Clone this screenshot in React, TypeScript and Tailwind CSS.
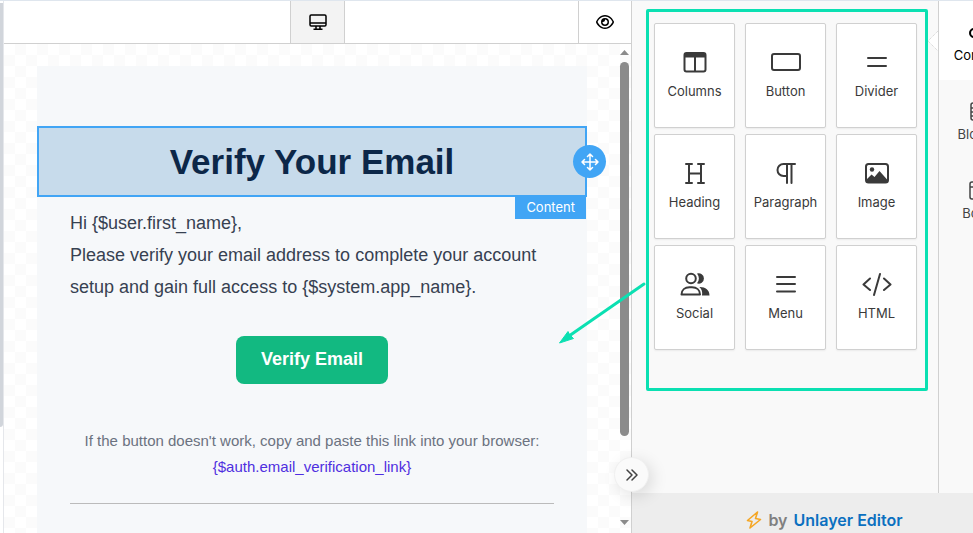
import type { ReactNode } from 'react';
import { FaRegEye } from 'react-icons/fa6';

interface Tool {
  label: string;
  icon: ReactNode;
}

const tools: Tool[] = [
  {
    label: 'Columns',
    icon: (
      <svg width="24" height="22" viewBox="0 0 24 22" fill="none" stroke="currentColor" strokeWidth="2">
        <rect x="1.5" y="2" width="21" height="18.5" rx="2" />
        <path d="M2 2.500h20v4H2z" fill="currentColor" stroke="none" />
        <path d="M12 5v15" />
      </svg>
    ),
  },
  {
    label: 'Button',
    icon: (
      <svg width="30" height="22" viewBox="0 0 30 22" fill="none" stroke="currentColor" strokeWidth="2">
        <rect x="1" y="3" width="28" height="16" rx="2" />
      </svg>
    ),
  },
  {
    label: 'Divider',
    icon: (
      <svg width="20" height="22" viewBox="0 0 20 22" fill="none" stroke="currentColor" strokeWidth="2" strokeLinecap="round">
        <path d="M1 7h18M1 15h18" />
      </svg>
    ),
  },
  {
    label: 'Heading',
    icon: (
      <svg width="22" height="22" viewBox="0 0 22 22" fill="none" stroke="currentColor" strokeWidth="2" strokeLinecap="round">
        <path d="M2 2h6M14 2h6M2 21h6M14 21h6M5 2v19M17 2v19M5 11.500h12" />
      </svg>
    ),
  },
  {
    label: 'Paragraph',
    icon: (
      <svg width="20" height="22" viewBox="0 0 20 22" fill="none" stroke="currentColor" strokeWidth="2" strokeLinecap="round">
        <path d="M19 2H7.500a6 6 0 0 0 0 12H11M11 2v19M15.500 2v19" />
      </svg>
    ),
  },
  {
    label: 'Image',
    icon: (
      <svg width="24" height="22" viewBox="0 0 24 22" fill="none" stroke="currentColor" strokeWidth="2">
        <rect x="1" y="2" width="22" height="18.500" rx="2.5" />
        <circle cx="7" cy="7.500" r="2.2" fill="currentColor" stroke="none" />
        <path d="M2 20v-3l4.500-4.500 3 2.500 5-6 8 9V20z" fill="currentColor" stroke="none" />
      </svg>
    ),
  },
  {
    label: 'Social',
    icon: (
      <svg width="30" height="24" viewBox="0 0 30 24" fill="none" stroke="currentColor" strokeWidth="2">
        <path d="M17 1.500a5.200 5.200 0 1 1 0 9.800 8 8 0 0 0 0-9.800z" fill="currentColor" stroke="none" />
        <path d="M20 15c5.500 0 9.500 3 9.500 8.500h-7.500c.6-3.600-.2-6.200-2.600-8.400z" fill="currentColor" stroke="none" />
        <circle cx="11" cy="6.500" r="4.800" />
        <path d="M1.500 22.500c0-4.600 3.500-7.200 8-7.200h2.500c4.500 0 8 2.600 8 7.200z" strokeLinejoin="round" />
      </svg>
    ),
  },
  {
    label: 'Menu',
    icon: (
      <svg width="22" height="22" viewBox="0 0 22 22" fill="none" stroke="currentColor" strokeWidth="2" strokeLinecap="round">
        <path d="M2 4h18M2 11h18M2 18.500h18" />
      </svg>
    ),
  },
  {
    label: 'HTML',
    icon: (
      <svg width="30" height="24" viewBox="0 0 30 24" fill="none" stroke="currentColor" strokeWidth="2" strokeLinecap="round" strokeLinejoin="round">
        <path d="M8 6.500 1.500 12.500 8 18M22 6.500l6.500 6-6.500 5.500M18 2l-6 21" />
      </svg>
    ),
  },
];

const tabs: Tool[] = [
  {
    label: 'Content',
    icon: (
      <svg width="20" height="20" viewBox="0 0 20 20" fill="none" stroke="currentColor" strokeWidth="2">
        <circle cx="6" cy="10" r="4" />
        <rect x="13" y="6" width="6" height="8" rx="1" />
      </svg>
    ),
  },
  {
    label: 'Blocks',
    icon: (
      <svg width="18" height="20" viewBox="0 0 18 20" fill="none" stroke="currentColor" strokeWidth="1.500">
        <rect x="2" y="1" width="15" height="17" rx="2" />
        <path d="M2 6h15M2 10h15M2 14h15M6 1v5" />
      </svg>
    ),
  },
  {
    label: 'Body',
    icon: (
      <svg width="20" height="20" viewBox="0 0 20 20" fill="none" stroke="currentColor" strokeWidth="1.500">
        <rect x="2" y="1" width="17" height="17" rx="2" />
        <path d="M2 6h17M7 1v5" />
      </svg>
    ),
  },
];

function Toolbar() {
  return (
    <header className="grid h-[43px] shrink-0 grid-cols-[1fr_auto_1fr] border-b border-[#d0d0d0] bg-white">
      <div />
      <button aria-label="Desktop view" className="flex w-[55px] items-center justify-center border-x border-[#d0d0d0] bg-[#f3f3f3] text-black">
        <svg width="18" height="17" viewBox="0 0 18 17" fill="none" stroke="currentColor" strokeWidth="1.500">
          <rect x="1" y="1" width="16" height="11" rx="1.200" />
          <path d="M1 9h16M7 12v3M11 12v3M4.500 15.300h9" />
        </svg>
      </button>
      <button aria-label="Preview" className="flex w-[53px] items-center justify-center justify-self-end border-l border-[#d0d0d0] text-black">
        <FaRegEye size={18} />
      </button>
    </header>
  );
}

function EmailBody() {
  return (
    <div className="min-w-0 flex-1 bg-[#f6f8fa] pt-[60px] font-['Liberation_Sans',Arial,sans-serif]">
      <div className="relative border-2 border-[#41a5f5] bg-[#c7dbeb] py-[10px]">
        <h1 className="text-center text-[35px] leading-[47px] font-bold text-[#0c2748]">Verify Your Email</h1>
        <button aria-label="Move block" className="absolute top-[17px] -right-[21px] flex size-[33px] items-center justify-center rounded-full bg-[#41a5f5] text-white">
          <svg width="18" height="18" viewBox="0 0 18 18" fill="none" stroke="currentColor" strokeWidth="1.500" strokeLinecap="round" strokeLinejoin="round">
            <path d="M9 1v16M1 9h16M6.500 3.500 9 1l2.500 2.500M6.500 14.500 9 17l2.500-2.500M3.500 6.500 1 9l2.500 2.500M14.500 6.500 17 9l-2.500 2.500" />
          </svg>
        </button>
        <span className="absolute top-full right-[-1px] h-6 bg-[#41a5f5] px-[11px] font-[Inter,sans-serif] text-[13px] leading-6 text-white">
          Content
        </span>
      </div>

      <div className="px-[33px] pt-[10px]">
        <p className="text-[18px] leading-8 text-[#374151]">{'Hi {$user.first_name},'}</p>
        <p className="text-[18px] leading-8 text-[#374151]">
          {'Please verify your email address to complete your account setup and gain full access to {$system.app_name}.'}
        </p>
        <div className="mt-[33px] text-center">
          <button className="h-12 rounded-lg bg-[#12b981] px-[25px] pb-[2px] align-top text-[18px] font-bold text-white">Verify Email</button>
        </div>
        <p className="mt-11 text-center text-[15px] leading-[26px] text-[#6b7280]">
          If the button doesn't work, copy and paste this link into your browser:
          <br />
          <a href="#" className="text-[#4f2fe0]">{'{$auth.email_verification_link}'}</a>
        </p>
        <hr className="mt-[23px] border-[#bbbbbb]" />
      </div>
    </div>
  );
}

function Scrollbar() {
  return (
    <div className="flex w-3 shrink-0 flex-col items-start pt-[6px] pb-2 pl-px">
      <svg width="9" height="5" viewBox="0 0 9 5" fill="#8b8b8b">
        <path d="M0 5 4.500 0 9 5z" />
      </svg>
      <div className="mt-[7px] mb-[84px] w-[9px] flex-1 rounded-full bg-[#8b8b8b]" />
      <svg width="9" height="5" viewBox="0 0 9 5" fill="#8b8b8b">
        <path d="M0 0h9L4.500 5z" />
      </svg>
    </div>
  );
}

function ToolPalette() {
  return (
    <div className="relative flex-1 pt-2 pr-[10px] pl-[14px]">
      <div className="rounded-[2px] border-3 border-[#0be0b2] pt-[11px] pr-2 pb-[38px] pl-[5px]">
        <div className="grid grid-cols-3 gap-x-[10px] gap-y-[6px]">
          {tools.map((tool) => (
            <button
              key={tool.label}
              className="flex h-[105px] flex-col items-center rounded-[2px] border border-[#d0d0d0] bg-white pt-[26px] text-[#3a3a3a] shadow-[0_1px_2px_rgba(0,0,0,0.06)]"
            >
              <span className="flex h-6 items-center">{tool.icon}</span>
              <span className="mt-[7px] text-[13px] leading-5">{tool.label}</span>
            </button>
          ))}
        </div>
      </div>
      {/* Pointer of the active tab */}
      <svg className="absolute top-[30px] right-0" width="10" height="20" viewBox="0 0 10 20">
        <path d="M10 0 0 10l10 10" fill="#fff" stroke="#d0d0d0" strokeDasharray="1 1" />
      </svg>
    </div>
  );
}

function SideTabs() {
  return (
    <nav className="w-[79px] shrink-0 border-l border-[#d0d0d0]">
      {tabs.map((tab, i) => (
        <button
          key={tab.label}
          className={`flex h-[79px] w-full flex-col items-center pt-[22px] text-[13px] leading-5 ${i === 0 ? 'bg-white text-black' : 'text-[#444444]'}`}
        >
          {tab.icon}
          <span className="mt-[2px]">{tab.label}</span>
        </button>
      ))}
    </nav>
  );
}

export default function App() {
  return (
    <div className="flex h-screen overflow-hidden border-t border-[#dfe6ee] bg-white font-[Inter,sans-serif]">
      <div className="w-1 shrink-0 border-r border-[#e5e7eb] pt-[2px]">
        <div className="h-4/5 rounded-br-[3px] bg-[#d1d5db]" />
      </div>

      <main className="flex min-w-0 flex-1 flex-col">
        <Toolbar />
        <div className="flex min-h-0 flex-1 bg-[repeating-conic-gradient(#fbfbfb_0_25%,#ffffff_0_50%)] bg-[length:22px_22px]">
          <div className="flex min-w-0 flex-1 overflow-hidden pt-[22px] pr-8 pl-[33px]">
            <EmailBody />
          </div>
          <Scrollbar />
        </div>
      </main>

      <div className="relative w-[342px] shrink-0 border-l border-[#d0d0d0] bg-[#f9f9f9]">
        <div className="h-full overflow-hidden">
          <div className="flex h-full w-[385px] flex-col">
            <div className="flex min-h-0 flex-1">
              <ToolPalette />
              <SideTabs />
            </div>
            <footer className="flex h-10 shrink-0 items-center justify-center bg-[#ededed] pt-[14px] text-[16px] font-semibold text-[#808080]">
              <svg className="mr-[6px]" width="16" height="18" viewBox="0 0 16 18" fill="none" stroke="#f5a623" strokeWidth="1.600" strokeLinejoin="round">
                <path d="M11.500 1 1.500 9.500l4.500 1L4 17l10.500-8.500-5-1z" />
              </svg>
              by
              <a href="#" className="ml-[6px] text-[#0b70c0]">Unlayer Editor</a>
            </footer>
          </div>
        </div>
        <button
          aria-label="Collapse panel"
          className="absolute bottom-[41px] -left-[18px] flex size-[35px] items-center justify-center rounded-full border border-[#f0f0f0] bg-[#fafafa] text-[#444444] shadow-[4px_4px_16px_rgba(0,0,0,0.12)]"
        >
          <svg width="12" height="12" viewBox="0 0 12 12" fill="none" stroke="currentColor" strokeWidth="1.500" strokeLinecap="round" strokeLinejoin="round">
            <path d="M1 1l5 5-5 5M6 1l5 5-5 5" />
          </svg>
        </button>
        {/* Drag hint from the tools to the canvas */}
        <svg className="pointer-events-none absolute top-[280px] -left-[74px]" width="90" height="66" viewBox="0 0 90 66">
          <path d="M86 3 11 55" stroke="#0be0b2" strokeWidth="3" strokeLinecap="round" />
          <path d="M1.500 62 10 50.500l1.500 3 4 4z" fill="#0be0b2" stroke="#0be0b2" strokeLinejoin="round" />
        </svg>
      </div>
    </div>
  );
}
